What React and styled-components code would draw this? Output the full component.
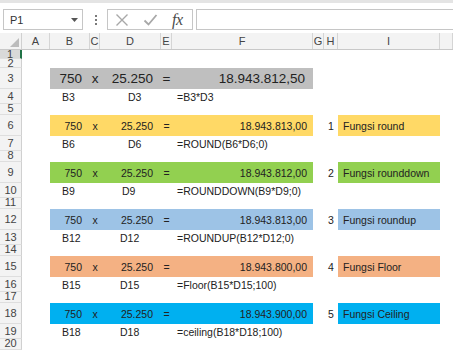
import React from 'react';
import styled, { createGlobalStyle } from 'styled-components';

const Global = createGlobalStyle`
  html, body { margin: 0; padding: 0; background: #ffffff; }
  body {
    font-family: "Liberation Sans", Arial, sans-serif;
    width: 453px;
    height: 350px;
    overflow: hidden;
  }
`;

const COLS = '22px 28px 40px 10px 61px 11px 141px 11px 14px 102px 1fr';

const Page = styled.div`
  width: 453px;
  height: 350px;
  overflow: hidden;
  display: flex;
  flex-direction: column;
  background: #fff;
`;

/* ---------- formula bar ---------- */
const Toolbar = styled.div`
  height: 34px;
  border-top: 3px solid #e4e4e4;
  padding: 6px 0 0 3px;
  box-sizing: content-box;
  display: flex;
  align-items: flex-start;
  background: #fff;
`;

const NameBox = styled.div`
  width: 80px;
  height: 21px;
  box-sizing: border-box;
  border: 1px solid #c6c6c6;
  display: flex;
  align-items: center;
  justify-content: space-between;
  padding: 0 4px 0 6px;
  font-size: 11px;
  color: #333;
`;

const Dots = styled.div`
  margin: 6px 8px 0 10px;
  width: 6px;
  display: flex;
  flex-direction: column;
  align-items: center;
  gap: 2px;
  span {
    width: 2px;
    height: 2px;
    background: #7a7a7a;
  }
`;

const FxBox = styled.div`
  width: 86px;
  height: 21px;
  box-sizing: border-box;
  border: 1px solid #c6c6c6;
  display: flex;
  align-items: center;
  padding-left: 7px;
  gap: 14px;
`;

const FxText = styled.span`
  font-family: "Liberation Serif", "Times New Roman", serif;
  font-style: italic;
  font-size: 16px;
  color: #4a4a4a;
  letter-spacing: -0.5px;
`;

const FormulaInput = styled.div`
  flex: 1;
  height: 21px;
  box-sizing: border-box;
  margin-left: 3px;
  border: 1px solid #c6c6c6;
  border-right: none;
  background: #fff;
`;

/* ---------- sheet ---------- */
const Sheet = styled.div`
  display: flex;
  flex-direction: column;
`;

const HeaderRow = styled.div`
  display: grid;
  grid-template-columns: ${COLS};
  height: 17px;
  box-sizing: border-box;
  border-bottom: 1px solid #c8c8c8;
  background: #f3f3f3;
`;

const Corner = styled.div`
  border-right: 1px solid #d0d0d0;
  display: flex;
  align-items: flex-end;
  justify-content: flex-end;
  padding: 0 2px 2px 0;
`;

const ColHead = styled.div`
  border-right: 1px solid #d5d5d5;
  display: flex;
  align-items: center;
  justify-content: center;
  font-size: 11px;
  color: #444;
  overflow: hidden;
`;

const Row = styled.div`
  display: grid;
  grid-template-columns: ${COLS};
  height: ${(p) => p.$h}px;
`;

const RowHead = styled.div`
  box-sizing: border-box;
  background: ${(p) => (p.$selected ? '#d9d9d9' : '#f3f3f3')};
  border-right: ${(p) => (p.$selected ? '2px solid #217346' : '1px solid #d0d0d0')};
  border-bottom: 1px solid #dedede;
  display: flex;
  justify-content: center;
  align-items: ${(p) => (p.$small ? 'flex-start' : 'center')};
  font-size: 11px;
  line-height: ${(p) => (p.$selected ? '9px' : '11px')};
  color: #444;
  overflow: hidden;
  span {
    display: block;
    margin-top: ${(p) => (p.$small ? '-1px' : '0')};
  }
`;

const Cell = styled.div`
  background: ${(p) => p.$bg || 'transparent'};
  display: flex;
  align-items: center;
  justify-content: ${(p) =>
    p.$align === 'right' ? 'flex-end' : p.$align === 'center' ? 'center' : 'flex-start'};
  padding-left: ${(p) => p.$pl || 0}px;
  padding-right: ${(p) => p.$pr || 0}px;
  font-size: ${(p) => (p.$big ? '13.5px' : '10.5px')};
  color: #222;
  white-space: nowrap;
  overflow: visible;
  min-width: 0;
`;

const Blank = styled.div``;

/* ---------- icons ---------- */
const CancelIcon = () => (
  <svg width="14" height="14" viewBox="0 0 14 14">
    <path d="M1.5 1.5 L12.5 12.5 M12.5 1.5 L1.5 12.5" stroke="#a8a8a8" strokeWidth="1.4" fill="none" />
  </svg>
);

const CheckIcon = () => (
  <svg width="15" height="14" viewBox="0 0 15 14">
    <path d="M1.5 7.5 L5.5 11.5 L13.5 2" stroke="#a8a8a8" strokeWidth="1.8" fill="none" />
  </svg>
);

const DropArrow = () => (
  <svg width="7" height="4" viewBox="0 0 7 4">
    <polygon points="0,0 7,0 3.5,4" fill="#555" />
  </svg>
);

const CornerTriangle = () => (
  <svg width="9" height="9" viewBox="0 0 9 9">
    <polygon points="9,0 9,9 0,9" fill="#bcbcbc" />
  </svg>
);

/* ---------- data ---------- */
const groups = [
  { n: 3, color: '#bfbfbf', big: true, result: '18.943.812,50', b: 'B3', d: 'D3', dpl: 28, f: '=B3*D3' },
  { n: 6, color: '#ffd966', result: '18.943.813,00', b: 'B6', d: 'D6', dpl: 28, f: '=ROUND(B6*D6;0)', idx: '1', label: 'Fungsi round' },
  { n: 9, color: '#92d050', result: '18.943.812,00', b: 'B9', d: 'D9', dpl: 22, f: '=ROUNDDOWN(B9*D9;0)', idx: '2', label: 'Fungsi rounddown' },
  { n: 12, color: '#9dc3e6', result: '18.943.813,00', b: 'B12', d: 'D12', dpl: 20, f: '=ROUNDUP(B12*D12;0)', idx: '3', label: 'Fungsi roundup' },
  { n: 15, color: '#f4b183', result: '18.943.800,00', b: 'B15', d: 'D15', dpl: 20, f: '=Floor(B15*D15;100)', idx: '4', label: 'Fungsi Floor' },
  { n: 18, color: '#00b0f0', result: '18.943.900,00', b: 'B18', d: 'D18', dpl: 20, f: '=ceiling(B18*D18;100)', idx: '5', label: 'Fungsi Ceiling' },
];

const columns = ['A', 'B', 'C', 'D', 'E', 'F', 'G', 'H', 'I', ''];

const EmptyRow = ({ n, h, selected }) => (
  <Row $h={h}>
    <RowHead $small={h < 12 && !selected} $selected={selected}>
      <span>{n}</span>
    </RowHead>
  </Row>
);

const BandRow = ({ g }) => (
  <Row $h={21}>
    <RowHead><span>{g.n}</span></RowHead>
    <Blank />
    <Cell $bg={g.color} $big={g.big} $align="right" $pr={8}>750</Cell>
    <Cell $bg={g.color} $big={g.big} $align="center">x</Cell>
    <Cell $bg={g.color} $big={g.big} $align="right" $pr={8}>25.250</Cell>
    <Cell $bg={g.color} $big={g.big} $align="center">=</Cell>
    <Cell $bg={g.color} $big={g.big} $align="right" $pr={g.big ? 8 : 6}>{g.result}</Cell>
    <Blank />
    <Cell $align="center">{g.idx || ''}</Cell>
    {g.label ? <Cell $bg={g.color} $pl={5}>{g.label}</Cell> : <Blank />}
  </Row>
);

const LabelRow = ({ g }) => (
  <Row $h={15}>
    <RowHead><span>{g.n + 1}</span></RowHead>
    <Blank />
    <Cell $pl={12}>{g.b}</Cell>
    <Blank />
    <Cell $pl={g.dpl}>{g.d}</Cell>
    <Blank />
    <Cell $pl={5}>{g.f}</Cell>
  </Row>
);

export default function App() {
  return (
    <Page>
      <Global />
      <Toolbar>
        <NameBox>
          <span>P1</span>
          <DropArrow />
        </NameBox>
        <Dots>
          <span />
          <span />
          <span />
        </Dots>
        <FxBox>
          <CancelIcon />
          <CheckIcon />
          <FxText>fx</FxText>
        </FxBox>
        <FormulaInput />
      </Toolbar>
      <Sheet>
        <HeaderRow>
          <Corner>
            <CornerTriangle />
          </Corner>
          {columns.map((c, i) => (
            <ColHead key={i}>{c}</ColHead>
          ))}
        </HeaderRow>
        <EmptyRow n={1} h={9} selected />
        <EmptyRow n={2} h={9} />
        {groups.map((g) => (
          <React.Fragment key={g.n}>
            <BandRow g={g} />
            <LabelRow g={g} />
            <EmptyRow n={g.n + 2} h={11} />
          </React.Fragment>
        ))}
      </Sheet>
    </Page>
  );
}
